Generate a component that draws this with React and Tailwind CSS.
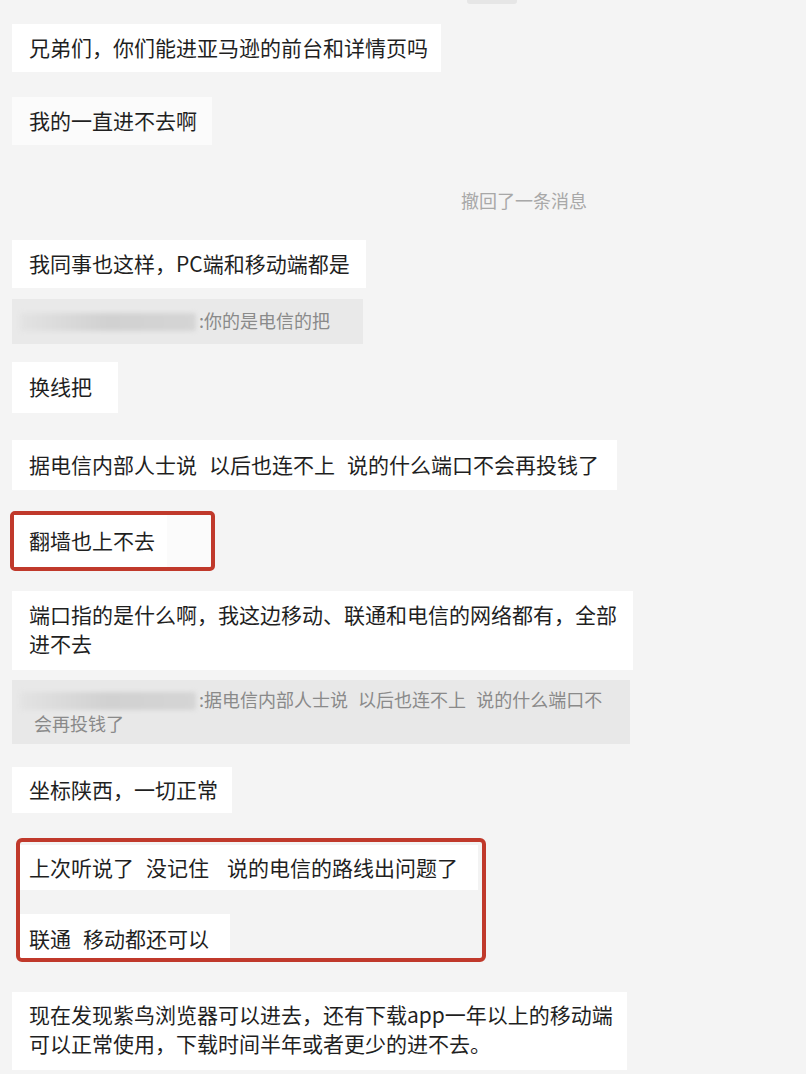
export default function App() {
  const blob =
    "inline-block align-[-3px] -ml-[14px] mr-[3px] w-[176px] h-[18px] rounded-[3px] bg-linear-to-r from-[#e3e3e3] via-[#d1d1d1] to-[#d5d5d5] blur-[2px]";
  return (
    <div className="w-[806px] h-[1074px] overflow-hidden bg-[#f4f4f4] flex flex-col items-start font-['Noto_Sans_CJK_SC','Noto_Sans',sans-serif] text-[21px] leading-[28px] text-[#1f1f1f] whitespace-pre [word-spacing:1.3px]">
      <div className="ml-[467px] w-[50px] h-[4px] rounded-b-[3px] bg-[#e6e6e6]" />

      <div className="mt-[20px] ml-[12px] w-[429px] h-[48px] bg-white flex items-center pl-[17px] pb-[3px]">
        兄弟们，你们能进亚马逊的前台和详情页吗
      </div>

      <div className="mt-[25px] ml-[12px] w-[200px] h-[48px] bg-[#fbfbfb] flex items-center pl-[17px] pb-[3px]">
        我的一直进不去啊
      </div>

      <div className="mt-[43px] ml-[461px] text-[18px] leading-[24px] text-[#a8a8a8]">
        撤回了一条消息
      </div>

      <div className="mt-[28px] ml-[12px] w-[354px] h-[48px] bg-white flex items-center pl-[17px] pb-[3px]">
        我同事也这样，PC端和移动端都是
      </div>

      <div className="mt-[11px] ml-[12px] w-[351px] h-[45px] bg-[#e9e9e9] pl-[22px] pt-[9px] text-[18px] leading-[24px] text-[#8a8a8a]">
        <span className={blob} />:你的是电信的把
      </div>

      <div className="mt-[18px] ml-[12px] w-[106px] h-[51px] bg-white flex items-center pl-[17px] pb-[3px]">
        换线把
      </div>

      <div className="mt-[27px] ml-[12px] w-[605px] h-[50px] bg-white flex items-center pl-[17px] pb-[3px]">
        据电信内部人士说  以后也连不上  说的什么端口不会再投钱了
      </div>

      <div className="mt-[21px] ml-[10px] w-[205px] h-[60px] border-4 border-[#c0392b] rounded-[5px] bg-[#fbfbfb] flex">
        <div className="w-[153px] bg-white flex items-center pl-[15px] pb-[3px]">
          翻墙也上不去
        </div>
      </div>

      <div className="mt-[20px] ml-[12px] w-[621px] h-[79px] bg-white pl-[17px] pt-[9px] leading-[29px]">
        端口指的是什么啊，我这边移动、联通和电信的网络都有，全部
        <br />
        进不去
      </div>

      <div className="mt-[10px] ml-[12px] w-[618px] h-[64px] bg-[#e8e8e8] pl-[22px] pt-[7px] text-[18px] leading-[24px] text-[#8a8a8a] [word-spacing:1px]">
        <span className={blob} />:据电信内部人士说  以后也连不上  说的什么端口不
        <br />
        会再投钱了
      </div>

      <div className="mt-[23px] ml-[12px] w-[220px] h-[46px] bg-white flex items-center pl-[17px] pb-[3px]">
        坐标陕西，一切正常
      </div>

      <div className="mt-[25px] ml-[16px] w-[470px] h-[124px] border-4 border-[#c0392b] rounded-[6px] bg-[#f3f3f3] flex flex-col items-start overflow-hidden">
        <div className="mt-[3px] w-[458px] h-[45px] bg-white flex items-center pl-[9px] pb-[2px]">
          上次听说了  没记住   说的电信的路线出问题了
        </div>
        <div className="mt-[24px] w-[210px] h-[44px] bg-white pl-[9px] pt-[10px]">
          联通  移动都还可以
        </div>
      </div>

      <div className="mt-[30px] ml-[12px] w-[615px] h-[78px] bg-white pl-[17px] pt-[8px] leading-[29px]">
        现在发现紫鸟浏览器可以进去，还有下载app一年以上的移动端
        <br />
        可以正常使用，下载时间半年或者更少的进不去。
      </div>
    </div>
  );
}
